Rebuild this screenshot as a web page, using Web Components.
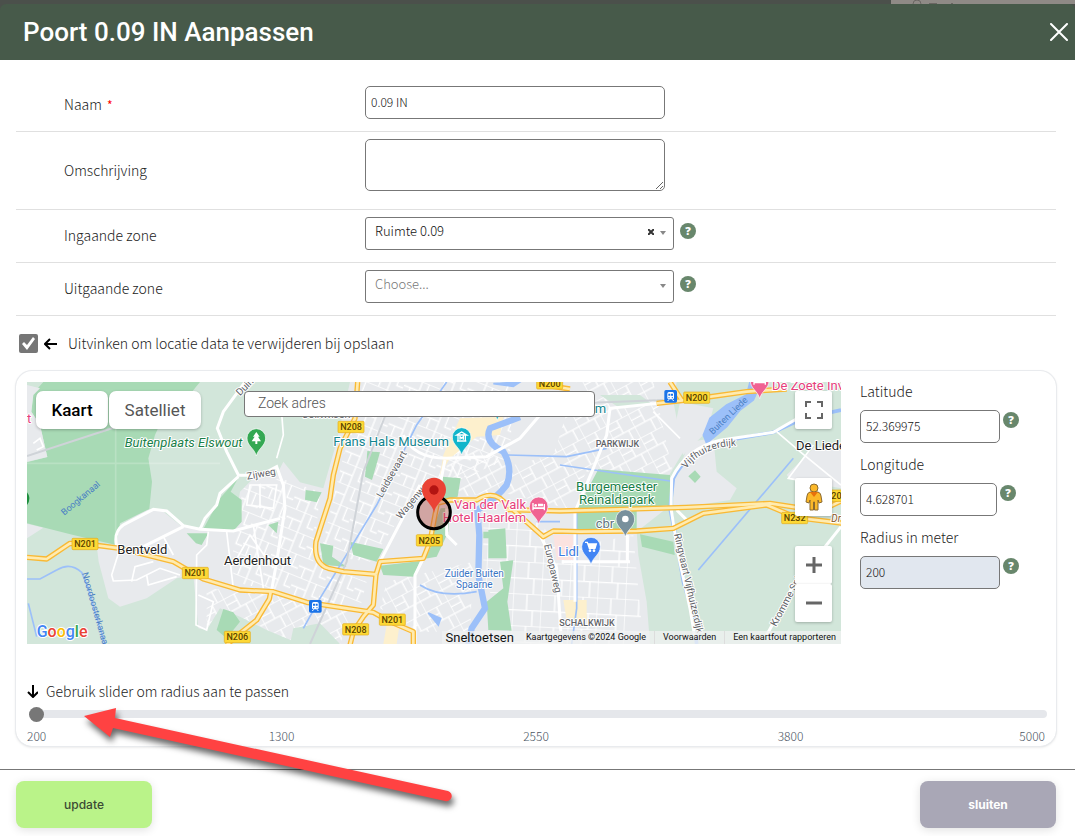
<!DOCTYPE html>
<html lang="nl">
<head>
<meta charset="utf-8">
<title>Poort 0.09 IN Aanpassen</title>
<style>
  body {
    margin: 0;
    background: #4b504b;
    color: #222;
    font: 300 15px/20px "Noto Sans CJK JP", "Noto Sans", sans-serif;
  }
</style>
</head>
<body>
<edit-dialog heading="Poort 0.09 IN Aanpassen">
  <field-row kind="text" label="Naam" value="0.09 IN" required></field-row>
  <field-row kind="textarea" label="Omschrijving"></field-row>
  <field-row kind="select" label="Ingaande zone" value="Ruimte 0.09" clearable></field-row>
  <field-row kind="select" label="Uitgaande zone" value="Choose..." placeholder></field-row>
  <check-line label="Uitvinken om locatie data te verwijderen bij opslaan"></check-line>
  <location-card></location-card>
  <dialog-button slot="actions" variant="primary">update</dialog-button>
  <dialog-button slot="actions" variant="muted">sluiten</dialog-button>
</edit-dialog>
<callout-arrow></callout-arrow>

<script>
const define = (name, render) => customElements.define(name, class extends HTMLElement {
  connectedCallback() {
    if (this.shadowRoot) return;
    this.attachShadow({ mode: 'open' }).innerHTML = render(this);
  }
});

const inputStyle = `
  * { box-sizing: border-box; }
  input.text, textarea, select {
    font: 300 12px/16px "Noto Sans CJK JP", "Noto Sans", sans-serif; color: #111;
    border: 1px solid #777; border-radius: 5px; background: #fff; padding: 0 5px 2px; margin: 0; outline: 0;
  }
  input.text { height: 33px; }`;

/* ---------- dialog shell ---------- */
define('edit-dialog', el => `
  <style>
    :host { display: flex; flex-direction: column; min-height: 100vh; box-sizing: border-box; }
    .behind { display: grid; grid-template-columns: 1fr 184px; height: 4px; flex: none; }
    .behind svg { background: #8f8a86; width: 184px; height: 4px; }
    header { display: flex; align-items: center; justify-content: space-between; box-sizing: border-box;
      height: 56px; padding: 0 7px 0 23px; background: #475a4a; color: #fff; border-radius: 6px 6px 0 0; flex: none; }
    h1 { margin: 0; font: 500 26px/32px Roboto, sans-serif; }
    header button { border: 0; background: none; padding: 0; width: 18px; height: 18px; }
    header svg { display: block; }
    main { flex: 1; background: #fff; padding: 19px 19px 23px 16px; }
    footer { display: flex; justify-content: space-between; background: #fff; border-top: 1px solid #777; padding: 11px 19px 8px 16px; }
  </style>
  <div class="behind"><span></span><svg viewBox="0 0 184 4"><path d="M22 4a4 4 0 0 1 8 0M38 3.500h8M60 3.500h2" fill="none" stroke="#6b6663"/></svg></div>
  <header><h1>${el.getAttribute('heading')}</h1>
    <button type="button" aria-label="Sluit venster"><svg width="18" height="18" viewBox="0 0 18 18"><path d="M1 1l16 16M17 1L1 17" stroke="#fff" stroke-width="2" stroke-linecap="round"/></svg></button>
  </header>
  <main><slot></slot></main>
  <footer><slot name="actions"></slot></footer>`);

define('dialog-button', el => `
  <style>
    :host { display: block; }
    button { width: 136px; height: 47px; border: 0; border-radius: 8px; font: 500 12px/16px Inter, sans-serif;
      background: #baf389; color: #3a4a34; box-shadow: 0 2px 10px rgba(0,0,0,.12); }
    .muted { background: #a9a7b6; color: #fff; font-weight: 700; }
  </style>
  <button type="button" class="${el.getAttribute('variant')}"><slot></slot></button>`);

/* ---------- help badge ---------- */
define('help-badge', () => `
  <style>
    :host { display: block; width: 16px; height: 16px; }
    span { display: block; border-radius: 8px; background: #68876c; color: #fff; text-align: center;
      font: 900 11px/16px "Noto Sans", sans-serif; }
  </style><span>?</span>`);

/* ---------- form rows ---------- */
define('field-row', el => {
  const kind = el.getAttribute('kind');
  const value = el.getAttribute('value') || '';
  const control = {
    text: `<input class="text" id="c" value="${value}">`,
    textarea: `<textarea id="c"></textarea>`,
    select: `<div class="pick"><select id="c" class="${el.hasAttribute('placeholder') ? 'ph' : ''}"><option>${value}</option></select>
      ${el.hasAttribute('clearable') ? '<button type="button" aria-label="Wissen"><svg width="6" height="6" viewBox="0 0 6 6"><path d="M0 0l6 6M6 0L0 6" stroke="#333" stroke-width="2"/></svg></button>' : ''}
      <svg class="caret" width="6" height="4" viewBox="0 0 6 4"><path d="M0 0h6L3 4z" fill="#888"/></svg></div><help-badge></help-badge>`
  }[kind];
  return `<style>${inputStyle}
    :host { display: grid; grid-template-columns: 301px 1fr; align-items: center; border-bottom: 1px solid #e0e0e0; padding: 0 48px; }
    label { font-size: 14px; padding-bottom: 2px; }
    b { color: #f00; font-weight: 400; font-size: 12px; line-height: 12px; margin-left: 2px; }
    .box { display: flex; gap: 6px; padding: 7px 0 12px; }
    .box.textarea { padding-bottom: 18px; }
    input.text { width: 300px; }
    textarea { width: 300px; height: 52px; display: block; resize: vertical; }
    .pick { display: grid; grid-template-columns: 1fr 12px 14px; width: 309px; align-items: start; }
    select { grid-area: 1 / 1 / 2 / 4; appearance: none; height: 33px; border-radius: 3px; padding: 0 9px 6px; font-size: 13px; }
    .ph { color: #777; }
    .pick button { grid-area: 1 / 2; border: 0; background: none; padding: 0; margin-top: 12px; width: 6px; height: 6px; }
    .pick svg { display: block; }
    .caret { grid-area: 1 / 3; margin-top: 14px; pointer-events: none; }
    help-badge { margin-top: 6px; }
  </style>
  <label for="c">${el.getAttribute('label')}${el.hasAttribute('required') ? ' <b>*</b>' : ''}</label>
  <div class="box ${kind}">${control}</div>`;
});

define('check-line', el => `
  <style>
    :host { display: flex; align-items: center; height: 55px; padding-left: 3px; }
    input { appearance: none; margin: 0 6px 0 0; width: 19px; height: 19px; background: #767676; border-radius: 2px; }
    input:checked::before { content: ""; display: block; width: 19px; height: 19px; background: #fff;
      clip-path: polygon(3px 10px, 5px 8px, 8px 11px, 14px 3px, 16px 5px, 8px 16px); }
    svg { margin-right: 11px; }
    label { font-size: 14px; padding-bottom: 2px; }
  </style>
  <input type="checkbox" id="c" checked>
  <svg width="13" height="12" viewBox="0 0 13 12"><path d="M13 6H1M6 1L1 6l5 5" fill="none" stroke="#000" stroke-width="2"/></svg>
  <label for="c">${el.getAttribute('label')}</label>`);

/* ---------- location card ---------- */
define('coord-field', el => `
  <style>${inputStyle}
    :host { display: block; }
    label { display: block; font-size: 14px; line-height: 18px; margin-bottom: 10px; }
    div { display: flex; gap: 3px; }
    input.text { width: 140px; }
    input.text.narrow { width: 137px; }
    input[readonly] { background: #e1e7ef; }
    help-badge { margin-top: 2px; }
  </style>
  <label for="c">${el.getAttribute('label')}</label>
  <div><input class="text ${el.hasAttribute('narrow') ? 'narrow' : ''}" id="c" value="${el.getAttribute('value')}" ${el.hasAttribute('locked') ? 'readonly' : ''}><help-badge></help-badge></div>`);

define('radius-slider', () => `
  <style>
    :host { display: block; }
    label { display: flex; align-items: center; gap: 8px; font-size: 14px; line-height: 20px; }
    .track { padding: 5px 0 0 2px; }
    input { appearance: none; display: block; width: 100%; height: 15px; margin: 0; background: none; }
    input::-webkit-slider-runnable-track { height: 8px; border-radius: 4px; background: #e5e7eb; }
    input::-webkit-slider-thumb { appearance: none; width: 15px; height: 15px; margin-top: -3px; border-radius: 8px; background: #777; }
    .ticks { display: grid; grid-template-columns: 1fr 2fr 2fr 2fr 1fr; margin-top: 7px; padding-right: 2px; text-align: center;
      font-size: 12px; line-height: 16px; color: #4b5563; }
    .ticks :first-child { text-align: left; }
    .ticks :last-child { text-align: right; }
  </style>
  <label for="r"><svg width="11" height="13" viewBox="0 0 11 13"><path d="M6 0v12M1 7l5 5 5-5" fill="none" stroke="#000" stroke-width="2"/></svg>Gebruik slider om radius aan te passen</label>
  <div class="track"><input id="r" type="range" min="200" max="5000" value="200"></div>
  <div class="ticks"><span>200</span><span>1300</span><span>2550</span><span>3800</span><span>5000</span></div>`);

define('location-card', () => `
  <style>
    :host { display: block; border-radius: 16px; padding: 11px 9px 2px 11px;
      box-shadow: 0 0 0 1px #e9ebee, 0 1px 3px rgba(0,0,0,.15); }
    .top { display: grid; grid-template-columns: 1fr 187px; gap: 19px; }
    .side { display: flex; flex-direction: column; gap: 12px; }
    radius-slider { margin-top: 37px; }
  </style>
  <div class="top"><city-map></city-map>
    <div class="side">
      <coord-field label="Latitude" value="52.369975"></coord-field>
      <coord-field label="Longitude" value="4.628701" narrow></coord-field>
      <coord-field label="Radius in meter" value="200" locked></coord-field>
    </div></div>
  <radius-slider></radius-slider>`);

/* ---------- map ---------- */
const shield = (x, y, t) => `<g class="sh"><rect x="${x}" y="${y}" width="78" height="34" rx="3"/><text x="${x + 39}" y="${y + 27}" text-anchor="middle">${t}</text></g>`;
const pin = (x, y, c, glyph) => `<g transform="translate(${x} ${y})"><path d="M0 54C-6 30-28 24-28 0a28 28 0 0 1 56 0C28 24 6 30 0 54z" fill="${c}" stroke="#fff" stroke-width="2"/>${glyph}</g>`;
const train = (x, y) => `<g transform="translate(${x} ${y})"><rect width="38" height="38" rx="5" fill="#1a73e8"/><rect x="9" y="6" width="20" height="22" rx="5" fill="#fff"/><path d="M12 11h6v6h-6zM20 11h6v6h-6z" fill="#1a73e8"/><circle cx="14" cy="23" r="2" fill="#1a73e8"/><circle cx="24" cy="23" r="2" fill="#1a73e8"/><path d="M14 28l-4 5M24 28l4 5" fill="none" stroke="#fff" stroke-width="3"/></g>`;
const road = d => `<path class="ra" d="${d}"/>`;
const mainRoads = [
  'M21 547L80 552L150 505L200 507L300 520L400 545L460 560L550 612L660 645L760 650L860 682L980 700L1060 712L1110 740L1180 770V810',
  'M752 652L748 672L710 735L660 775L620 810',
  'M1013 21L1005 130L960 220L940 300L930 370L888 500Q880 565 925 580L970 590L1068 598',
  'M1068 598L1080 560L1210 550L1230 500L1245 420L1252 385L1290 375L1370 375Q1410 350 1440 370L1480 405L1570 485L1600 468L1680 470L1850 468L1960 460L2050 415L2240 390L2330 428L2470 445',
  'M1068 598L1060 690L1030 725L1000 770L990 810',
  'M1460 404L1620 408L1800 403L2000 397L2250 385L2400 408L2470 375',
  'M1560 28L1650 42M1910 85L2000 75L2180 50L2300 42M1950 21L1985 75'
];

define('city-map', () => `
  <style>
    :host { display: grid; grid-template: 262px / 1fr; position: relative; overflow: hidden; background: #e8eaed; font-family: Roboto, sans-serif; font-weight: 400; }
    .art { display: block; width: 100%; height: 262px; }
    .art text { font-family: Roboto, sans-serif; paint-order: stroke; stroke: #fff; stroke-width: 6px; stroke-linejoin: round; font-size: 39px; }
    .sh rect { fill: #fdd835; stroke: #e3ac1c; stroke-width: 2; }
    .art .sh text { stroke: none; fill: #5a4300; font-size: 27px; font-weight: 500; }
    .art .s { font-size: 30px; fill: #5f6368; }
    .art .xs { font-size: 27px; }
    .art .w { fill: #4a7fc4; stroke: none; }
    .art .wh { fill: #3a75c4; font-size: 30px; }
    .art .p { fill: #e6407c; }
    .art .g { fill: #188048; }
    .art .t { fill: #12858f; }
    .art .d { fill: #222; }
    .lg path { fill: #d2e6da; } .dg path { fill: #a8dab5; }
    .st path { fill: none; stroke: #fff; stroke-width: 5; }
    .st .m { stroke-width: 9; }
    .wa path { fill: none; stroke: #9cc0f9; stroke-width: 5; }
    .ra { fill: none; stroke: #f9b934; stroke-width: 16; stroke-linejoin: round; }
    .rb { fill: none; stroke: #ffebb0; stroke-width: 8; stroke-linejoin: round; }
    button { border: 0; padding: 0; background: #fff; box-shadow: 0 1px 3px rgba(0,0,0,.25); display: grid; place-items: center; }
    .types { position: absolute; left: 9px; top: 9px; display: flex; gap: 1px; }
    .types button { height: 38px; width: 92px; border-radius: 7px; font: 400 17px/20px Roboto, sans-serif; color: #565656; }
    .types .on { width: 72px; color: #000; font-weight: 500; }
    .find { position: absolute; left: 217px; top: 9px; box-sizing: border-box; width: 351px; height: 26px; border: 1px solid #777; border-radius: 4px;
      padding: 0 13px 2px; font: 300 14px/20px Roboto, sans-serif; color: #333; margin: 0; }
    .find::placeholder { color: #555; }
    .tools { position: absolute; right: 9px; top: 9px; display: grid; row-gap: 49px; }
    .tools button { width: 37px; height: 38px; border-radius: 2px; }
    .tools button svg { display: block; }
    .zoom { display: grid; margin-top: -19px; }
    .legal { position: absolute; right: 0; bottom: 0; display: flex; align-items: center; height: 13px; background: rgba(240,242,241,.75);
      font-size: 9px; line-height: 13px; }
    .legal a, .legal span { color: #111; text-decoration: none; padding: 0 8px; }
    .legal a:last-child { padding-right: 5px; }
    .legal a { border-left: 1px solid #ddd; }
    .legal .keys { border: 0; background: none; box-shadow: none; font: 400 13px/13px Roboto, sans-serif; color: #111; padding: 0 4px; }
  </style>
  <svg class="art" viewBox="21 21 2442 786" preserveAspectRatio="xMidYMid slice" role="img" aria-label="Kaart van Haarlem">
    <defs>
      <pattern id="pa" width="90" height="62" patternUnits="userSpaceOnUse" patternTransform="rotate(22)"><path d="M0 0H90M0 31H48M48 0V62M20 31V62M70 0V40L90 40" fill="none" stroke="#fff" stroke-width="4"/></pattern>
      <pattern id="pb" width="74" height="80" patternUnits="userSpaceOnUse" patternTransform="rotate(-28)"><path d="M0 0H74M0 44H74M36 0V44M0 0V80M54 44V80M0 22H36" fill="none" stroke="#fff" stroke-width="4"/></pattern>
      <pattern id="pc" width="84" height="96" patternUnits="userSpaceOnUse" patternTransform="rotate(3)"><path d="M0 0H84M0 0V96M42 0V50H84M0 50H42M60 50V96" fill="none" stroke="#fff" stroke-width="4"/></pattern>
      <path id="vijf" d="M1998 282Q2050 216 2145 212"/>
    </defs>
    <rect x="21" y="21" width="2442" height="786" fill="#e8eaed"/>
    <path d="M670 340L780 310L900 350L880 560L1040 620L1020 700L900 680L640 620L640 480z" fill="url(#pa)"/>
    <path d="M1020 21H1480L1470 250L1280 330L1200 340L1050 560L900 540L950 330z" fill="url(#pa)"/>
    <path d="M1270 180L1480 270L1600 240L1670 21H1900L1960 300L1700 290L1640 400L1440 350L1290 370z" fill="url(#pb)"/>
    <path d="M1100 620L1360 560L1350 770H1200L1080 700z" fill="url(#pb)"/>
    <path d="M1390 440H1550L1640 520L1840 480L1870 807H1470L1390 600z" fill="url(#pc)"/>
    <path d="M560 640L800 660L1000 710L960 807H800L700 740L560 760z" fill="url(#pb)"/>
    <g class="lg">
      <path d="M21 21H990L950 200L910 340L840 322L790 260L770 300L700 310L660 350L640 470L540 460L480 450L420 402L380 404L300 450L285 510H230L236 560L265 670L300 695L380 670L470 610L520 600L535 760L560 765L600 700L660 725L740 765L840 807H21z"/>
      <path d="M1970 21H2463V807H1890L1880 680L1855 540L1850 470L1940 400L1948 300L1990 230L1960 80z"/>
      <path d="M820 760L900 745L960 807H810zM1740 60H1860L1900 90L1800 100z"/>
    </g>
    <g fill="#e8eaed">
      <path d="M21 446L70 458L21 490zM2010 200L2080 190L2090 290L2150 340L2130 375L2050 388L1960 390L1960 320zM2300 300L2380 220L2463 200V340L2310 312z"/>
      <path d="M1980 80L2080 100L2060 170L1990 240L1960 180z"/>
    </g>
    <g class="dg">
      <path d="M70 21H540L500 70L430 125L405 180L385 250L396 320L388 402L300 445L288 510L160 480L21 445V262L82 246L60 150L34 110L40 55z"/>
      <path d="M550 462L600 370L655 308L632 350L665 375L665 440L640 468zM500 475H565L545 510L528 505zM745 450L775 440L770 475z"/>
      <path d="M1042 228L1080 232L1056 315L1035 305zM857 345L905 352L890 382L855 374zM1268 305L1322 310L1313 365L1270 375zM1262 400L1290 398L1285 470L1250 545L1210 552L1230 480z"/>
      <path d="M900 505L940 512L936 545L980 575L910 570zM990 500L1090 522L1070 560L1000 540zM1080 572L1200 558L1180 605L1090 600zM1390 470H1410V490H1390zM1405 465L1456 460L1460 550H1405zM1440 560L1480 556L1462 680L1475 767L1405 765L1400 680L1450 640z"/>
      <path d="M1670 405L1735 283L1950 300V390L1850 400L1850 465H1670zM1860 478L1960 500L1964 540L1866 515zM2025 286L2042 305L2025 324L2005 304zM590 765L610 702L640 712L660 740L620 790z"/>
    </g>
    <path fill="#e8eaed" d="M21 30L60 40L40 60L34 110L60 150L82 246L21 260z"/>
    <g fill="#fdf0cd"><path d="M1320 130L1450 125L1440 180L1370 185L1290 250L1260 300L1270 240zM1630 675H1700V735H1640zM1100 750L1140 740L1130 807H1090z"/></g>
    <path d="M1600 480H1660V555H1610z" fill="#fbe3e0"/>
    <g class="wa">
      <path d="M21 612H60L110 585Q150 560 185 592L205 640L225 710L255 807M25 685L50 785"/>
      <path d="M1280 21L1190 150L1070 390L900 670L850 760"/>
      <path style="stroke-width:19" d="M1500 126L1410 160Q1390 200 1450 230Q1480 280 1460 330Q1430 370 1372 405L1378 480L1375 600L1395 700L1355 760L1345 810"/>
      <path d="M1460 240L1640 245L1760 220M1620 270L1950 318M1670 400V700L1655 807M1200 630Q1260 670 1370 650M1620 440H1550"/>
      <path style="stroke-width:11" d="M2463 105L2350 130L2260 172L2180 186L2100 200Q2000 230 1960 310L1950 400L1970 500L1990 620L2020 720L2030 807"/>
      <path d="M2320 250L2035 585"/>
      <path d="M2050 180L2070 130L2120 90L2180 60L2190 21H2225L2200 75L2160 105L2120 155L2060 205z" style="fill:#9cc0f9"/>
      <path d="M1225 714L1262 730L1255 750zM1420 26L1500 21L1480 34z" style="fill:#9cc0f9"/>
    </g>
    <g class="st">
      <path class="m" d="M675 21L610 110L592 160L620 230L655 300L720 302L770 275L790 330L795 400L770 560L755 645M655 305L600 355L590 390L555 430L540 463M290 515Q280 470 310 450L400 403L440 408L490 452L540 463L640 468L780 430M490 455L370 515"/>
      <path d="M300 520L275 600L280 618L350 615L420 580L480 600M430 485L460 540M380 600L385 630L470 605M335 620L345 575L400 560M565 470L560 510L530 540L528 750L560 765L580 680L535 660M690 330H770L760 400L680 390zM720 330V400M640 570L690 480L760 580M620 470L640 640M700 450L730 640M40 205L60 190L70 215L50 225"/>
      <path class="m" d="M1280 250Q1180 250 1150 180M1280 250L1400 245L1500 190L1560 120M1275 255L1262 320M1200 330L1080 560M1230 510L1185 600V807M1280 400V480L1310 510M1560 480L1610 580L1625 807M1665 680V520V410L1720 280L1760 180L1770 100L1960 80M1625 560H1830M1822 480V560"/>
      <path class="m" d="M2463 455L2380 560L2330 610L2290 690L2240 780M1970 405L2005 440M2350 120L2260 172L2100 196Q2000 220 1955 310L1953 400L1975 540L2010 700L2025 790"/>
      <path d="M780 50L790 180L770 250M2270 170L2340 230L2463 330M2380 210L2305 310L2420 330M1900 110L1980 190"/>
      <path d="M21 265H600M287 160V510" stroke-opacity=".2"/>
    </g>
    <path d="M21 243L260 165L380 125M1120 60L1030 290L980 560L870 807M1540 90L1930 75" fill="none" stroke="#cfd3d8" stroke-width="6"/>
    ${mainRoads.map(road).join('')}
    ${mainRoads.map(d => `<path class="rb" d="${d}"/>`).join('')}
    ${shield(156, 490, 'N201')}${shield(487, 577, 'N201')}${shield(613, 769, 'N206')}${shield(954, 139, 'N208')}${shield(1189, 479, 'N205')}
    ${shield(968, 746, 'N208')}${shield(1078, 717, 'N201')}${shield(1550, 8, 'N200')}${shield(1991, 51, 'N200')}${shield(2285, 412, 'N232')}
    <g class="sh"><rect x="2400" y="345" width="70" height="34"/><text x="2434" y="372">20</text></g>
    ${train(867, 675)}${train(1933, 45)}
    <text class="p" x="21" y="145">t</text>
    <text class="g" x="314" y="217" font-style="italic">Buitenplaats Elswout</text>
    <text class="d" x="292" y="537">Bentveld</text>
    <text class="d" x="612" y="571">Aerdenhout</text>
    <text class="s" transform="translate(682 314) rotate(-10)">Zijweg</text>
    <text class="s" transform="translate(660 64) rotate(-45)">Duin</text>
    <text class="w xs" transform="translate(133 422) rotate(-40)">Boogkanaal</text>
    <text class="w xs" transform="translate(186 595) rotate(74)">Noordoosterkanaal</text>
    <text class="s xs" x="848" y="130">DUINWIJCK</text>
    <text class="t" x="940" y="214">Frans Hals Museum</text>
    <text class="t" x="1724" y="113">m</text>
    <text class="s" transform="translate(1086 370) rotate(-61)">Leidsevaart</text>
    <text class="s" transform="translate(1142 434) rotate(-50)">Wagenweg</text>
    <text class="p" x="1302" y="402">Van der Valk</text>
    <text class="p" x="1268" y="441">Hotel Haarlem</text>
    <text x="1615" y="543" fill="#3b7be0">Lidl</text>
    <text class="wh" x="1363" y="606" text-anchor="middle">Zuider Buiten</text>
    <text class="wh" x="1363" y="639" text-anchor="middle">Spaarne</text>
    <text class="s" transform="translate(1572 510) rotate(77)">Europaweg</text>
    <text class="s xs" x="1727" y="217" font-weight="500">PARKWIJK</text>
    <text class="s xs" x="1618" y="754" font-weight="500">SCHALKWIJK</text>
    <text class="g" x="1790" y="347" text-anchor="middle">Burgemeester</text>
    <text class="g" x="1790" y="387" text-anchor="middle">Reinaldapark</text>
    <text x="1727" y="459" fill="#5f7380">cbr</text>
    <text class="w xs" transform="translate(2078 180) rotate(-44)">Buiten Liede</text>
    <text class="s"><textPath href="#vijf">Vijfhuizerdijk</textPath></text>
    <text class="s" transform="translate(1962 478) rotate(77)">Ringvaart Vijfhuizerdijk</text>
    <text class="p" x="2256" y="45">De Zoete Inv</text>
    <text class="d" x="2328" y="226">De Liede</text>
    <text class="s" transform="translate(2268 756) rotate(-62)">Kromme Spie</text>
    <text class="s" x="2434" y="440" font-style="italic" style="fill:#8a5a2b">Dr</text>
    ${pin(709, 189, '#34a853', '<path d="M0-18L10-4H5L14 10H3V18H-3V10H-14L-5-4H-10z" fill="#fff"/>')}
    ${pin(1325, 186, '#12b5cb', '<path d="M-15-6L0-15L15-6zM-14 12H14M-11-4V10M11-4V10M-5 8V-1L0 4L5-1V8" fill="none" stroke="#fff" stroke-width="4"/>')}
    ${pin(1432, 82, '#12b5cb', '')}
    ${pin(1556, 394, '#f06292', '<path d="M-19-10H-15V3H15V-7H19V12H15V8H-15V12H-19zM-2-8H13V0H-2z" fill="#fff"/><circle cx="-9" cy="-3" r="4" fill="#fff"/>')}
    ${pin(2219, 17, '#f06292', '<path d="M-19-10H-15V3H15V-7H19V12H15V8H-15V12H-19z" fill="#fff"/>')}
    ${pin(1713, 515, '#4285f4', '<path d="M-18-13H-11L-5 5H12L16-8H-8" fill="#fff" stroke="#fff" stroke-width="4"/><circle cx="-3" cy="12" r="4" fill="#fff"/><circle cx="9" cy="12" r="4" fill="#fff"/>')}
    ${pin(1816, 432, '#78909c', '<circle r="10" fill="#fff"/>')}
    <path d="M21 352Q36 370 21 390z" fill="#1e8e3e"/>
    <circle cx="1242" cy="412" r="49" fill="#b0453f" fill-opacity=".42" stroke="#000" stroke-width="9"/>
    <path d="M1242 414C1238 384 1206 374 1206 344a36 36 0 0 1 72 0C1278 374 1246 384 1242 414z" fill="#ea4335"/>
    <circle cx="1242" cy="345" r="14" fill="#b31412"/>
    <text x="50" y="786" style="font-size:48px;stroke-width:6px" font-weight="500"><tspan fill="#4285f4">G</tspan><tspan fill="#ea4335">o</tspan><tspan fill="#fbbc04">o</tspan><tspan fill="#4285f4">g</tspan><tspan fill="#34a853">l</tspan><tspan fill="#ea4335">e</tspan></text>
  </svg>
  <div class="types"><button type="button" class="on">Kaart</button><button type="button">Satelliet</button></div>
  <input class="find" type="text" placeholder="Zoek adres" aria-label="Zoek adres">
  <div class="tools">
    <button type="button" aria-label="Volledig scherm"><svg width="18" height="18" viewBox="0 0 18 18"><path d="M1 6V1h5M12 1h5v5M17 12v5h-5M6 17H1v-5" fill="none" stroke="#666" stroke-width="2"/></svg></button>
    <button type="button" aria-label="Street View"><svg width="18" height="30" viewBox="0 0 18 30"><path d="M5 10h8q3 1 3 4l1 6-3 1-1-3v10H9.500V20h-1v8H5V18l-1 3-3-1 1-6q0-3 3-4z" fill="#fbb829" stroke="#8a6a30"/><circle cx="9" cy="6" r="4" fill="#fbb829" stroke="#8a6a30"/><path d="M5 10l4 5 4-5z" fill="#e8710a"/></svg></button>
    <div class="zoom">
      <button type="button" aria-label="Inzoomen"><svg width="18" height="18" viewBox="0 0 18 18"><path d="M9 1v16M1 9h16" stroke="#666" stroke-width="3"/></svg></button>
      <button type="button" aria-label="Uitzoomen"><svg width="18" height="18" viewBox="0 0 18 18"><path d="M1 9h16" stroke="#666" stroke-width="3"/></svg></button>
    </div>
  </div>
  <div class="legal"><button type="button" class="keys">Sneltoetsen</button><span>Kaartgegevens ©2024 Google</span><a href="#v">Voorwaarden</a><a href="#f">Een kaartfout rapporteren</a></div>`);

/* ---------- red callout pointing at the slider ---------- */
define('callout-arrow', () => `
  <style>
    :host { position: absolute; left: 80px; top: 700px; pointer-events: none; }
    svg { display: block; filter: drop-shadow(2px 5px 3px rgba(0,0,0,.6)); }
  </style>
  <svg width="380" height="116" viewBox="80 700 380 116"><path d="M84 716L116 708L115 718L448 791A5 5 0 0 1 445 801L113 728L110 737z" fill="#ff4242"/></svg>`);
</script>
</body>
</html>
